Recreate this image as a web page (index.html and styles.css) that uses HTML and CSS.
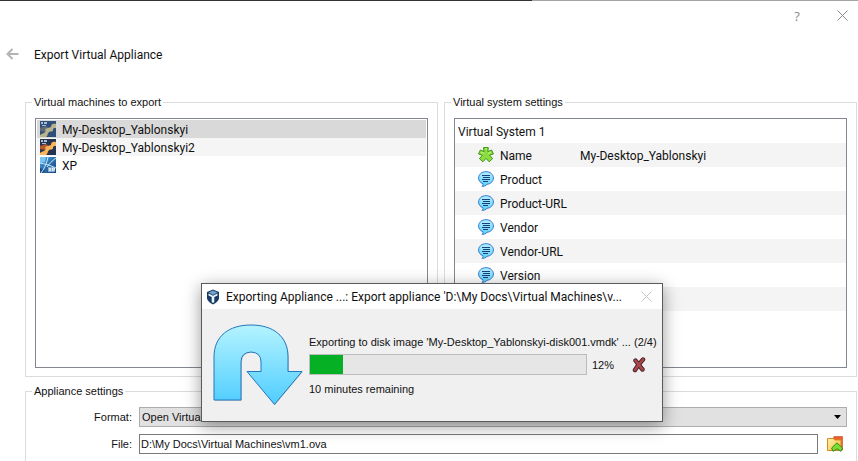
FILE: index.html
```html
<!DOCTYPE html>
<html lang="en">
<head>
<meta charset="utf-8">
<title>Export Virtual Appliance</title>
<link rel="stylesheet" href="styles.css">
</head>
<body>
<svg class="defs" aria-hidden="true">
  <defs>
    <linearGradient id="bubble-fill" x1="0" y1="0" x2="0" y2="1"><stop offset="0" stop-color="#b4efff"/><stop offset="1" stop-color="#5fcefb"/></linearGradient>
    <linearGradient id="arrow-fill" x1="0" y1="0" x2="0" y2="1"><stop offset="0" stop-color="#b4f3ff"/><stop offset="1" stop-color="#4fcdff"/></linearGradient>
    <linearGradient id="xp-fill" x1="0" y1="0" x2="1" y2="1"><stop offset="0" stop-color="#4ba3e3"/><stop offset="1" stop-color="#143f78"/></linearGradient>
    <linearGradient id="folder-fill" x1="0" y1="0" x2="1" y2="1"><stop offset="0" stop-color="#fff3a8"/><stop offset="1" stop-color="#f8bc45"/></linearGradient>
    <symbol id="bubble" viewBox="0 0 16 16">
      <path d="M8 .7C12.200 .7 15.400 3.300 15.400 7C15.400 10.500 12.400 13 9 13.300C7.800 14.700 6 15.500 4 15.300C4.900 14.500 5.200 13.700 5 12.800C2.400 11.900 .6 9.700 .6 7C.6 3.300 3.800 .7 8 .7Z" fill="url(#bubble-fill)" stroke="#2c78cc"/>
      <path d="M4 4.500h8M5 6.500h7M4 8.500h8M5 10.500h5" stroke="#16427e" fill="none"/>
    </symbol>
    <symbol id="vm-server" viewBox="0 0 16 16">
      <path class="vm-back" d="M0 0h16v16H0z"/>
      <path class="vm-tag" d="M1 1h2v2H1zM4 1h3v2H4zM2 4h4v1H2z"/>
      <path class="vm-mid" d="M0 7L6 5L10 8L5 11L0 10z"/>
      <path class="vm-shape" d="M16 3C13 2 11 3 11 6C9 7 7 7 5 8C6 9 6 11 4 12C2 13 1 13 0 14V16H6C8 15 7 13 9 11C11 10 13 11 13 9C13 7 14 7 16 7Z"/>
    </symbol>
  </defs>
</svg>

<div class="wizard">
  <div class="desktop-edge"></div>
  <header class="caption">
    <button class="caption-button" type="button" aria-label="Help">?</button>
    <button class="caption-button" type="button" aria-label="Close"><svg width="11" height="11" viewBox="0 0 11 11"><path d="M.5.5l10 10M10.500.5l-10 10"/></svg></button>
  </header>
  <div class="heading">
    <button class="back" type="button" aria-label="Back"><svg width="13" height="14" viewBox="0 0 13 14"><path d="M6.500 1L1.500 6l5 5M1.500 6H12.500"/></svg></button>
    <h1>Export Virtual Appliance</h1>
  </div>

  <main class="content">
    <div class="columns">
      <fieldset class="group">
        <legend>Virtual machines to export</legend>
        <ul class="panel machines" role="listbox" aria-label="Virtual machines to export">
          <li class="machine selected" role="option" aria-selected="true"><svg width="16" height="16"><use href="#vm-server"/></svg><span>My-Desktop_Yablonskyi</span></li>
          <li class="machine alternate" role="option" aria-selected="false"><svg width="16" height="16"><use href="#vm-server"/></svg><span>My-Desktop_Yablonskyi2</span></li>
          <li class="machine" role="option" aria-selected="false"><svg width="16" height="16" viewBox="0 0 16 16"><path fill="url(#xp-fill)" d="M0 0h16v16H0z"/><path fill="#7cc4f0" d="M0 0h6L5 5L0 6z"/><path fill="#174a82" d="M0 11l5 2l-2 3H0z"/><path d="M8 0C7 5 5 11 1 16M0 6c5 1 10 2 16 5M16 1C12 4 9 7 7 10" stroke="#c9eaff" fill="none"/><path fill="#7fa9cd" d="M8 10h7v5H8z"/><path d="M9 11l2 3M11 11l-2 3M12.500 14v-3h2v2h-2" stroke="#e6f2fb" fill="none"/></svg><span>XP</span></li>
        </ul>
      </fieldset>
      <fieldset class="group">
        <legend>Virtual system settings</legend>
        <div class="panel">
          <table class="settings">
            <colgroup><col class="name-column"><col></colgroup>
            <tbody>
              <tr><th colspan="2" class="system">Virtual System 1</th></tr>
              <tr><th scope="row"><span class="setting"><svg width="16" height="16" viewBox="0 0 16 16"><path d="M5.500 .6H10.300L9.800 4.700L13.600 3L15.400 7L11.600 8.200L14.600 11.600L11.200 14.800L8 11.400L4.800 14.800L1.400 11.600L4.400 8.200L.6 7L2.400 3L6 4.700Z" fill="#8add3c" stroke="#3c9418" stroke-linejoin="round"/><path d="M7 2h2M3 5l3 1.500M13 5l-3 1.500" stroke="#c4f58a" fill="none"/></svg>Name</span></th><td>My-Desktop_Yablonskyi</td></tr>
              <tr><th scope="row"><span class="setting"><svg width="16" height="16"><use href="#bubble"/></svg>Product</span></th><td></td></tr>
              <tr><th scope="row"><span class="setting"><svg width="16" height="16"><use href="#bubble"/></svg>Product-URL</span></th><td></td></tr>
              <tr><th scope="row"><span class="setting"><svg width="16" height="16"><use href="#bubble"/></svg>Vendor</span></th><td></td></tr>
              <tr><th scope="row"><span class="setting"><svg width="16" height="16"><use href="#bubble"/></svg>Vendor-URL</span></th><td></td></tr>
              <tr><th scope="row"><span class="setting"><svg width="16" height="16"><use href="#bubble"/></svg>Version</span></th><td></td></tr>
              <tr><th></th><td></td></tr>
            </tbody>
          </table>
        </div>
      </fieldset>
    </div>

    <fieldset class="group appliance">
      <legend>Appliance settings</legend>
      <div class="form">
        <label for="format">Format:</label>
        <div class="select-box">
          <select id="format"><option>Open Virtualization Format 2.0</option></select>
          <svg width="7" height="4" viewBox="0 0 7 4" aria-hidden="true"><path d="M0 0h7L3.500 4z"/></svg>
        </div>
        <label for="file">File:</label>
        <div class="file-row">
          <input id="file" type="text" value="D:\My Docs\Virtual Machines\vm1.ova">
          <button class="browse" type="button" aria-label="Choose file"><svg width="16" height="16" viewBox="0 0 16 16"><path d="M6 3L7 .5h8.500V14H6z" fill="#e8602a" stroke="#c94a1c" stroke-width=".6"/><path d="M.5 2.500h6l1 1.500h6.500v10.500H.5z" fill="url(#folder-fill)" stroke="#d98a22"/><path d="M10 6.800L15.500 12L14 15.300L10 12.800L6 15.300L4.600 12z" fill="#7bdc35" stroke="#32881a" stroke-linejoin="round"/></svg></button>
        </div>
      </div>
    </fieldset>
  </main>
</div>

<section class="dialog" role="dialog" aria-labelledby="dialog-title">
  <header class="dialog-bar">
    <svg width="12" height="16" viewBox="0 0 12 16"><path d="M6 .5L12 3v6.500Q11 13 6 15.500Q1 13 0 9.500V3z" fill="#183a64"/><path d="M6 1.500L10.500 3.500L6 6L1.500 3.500z" fill="#6f9fc5"/><path d="M1.500 4.500L6 6.800L10.500 4.500V6.500L7.300 8v5L6 14L4.700 13V8L1.500 6.500z" fill="#e8f4fb"/></svg>
    <h2 id="dialog-title">Exporting Appliance ...: Export appliance 'D:\My Docs\Virtual Machines\v...</h2>
    <button class="dialog-close" type="button" aria-label="Close"><svg width="11" height="11" viewBox="0 0 11 11"><path d="M.5.5l10 10M10.500.5l-10 10"/></svg></button>
  </header>
  <div class="dialog-body">
    <svg class="turn" width="91" height="84" viewBox="0 0 91 84"><path d="M2 77V34Q3 3 39 2Q75 3 76 34V48H90L62 81L35 48H49V38Q49 29 39 28.500Q29 29 29 38V77Z" fill="#777" opacity=".3"/><path d="M1 76V33C1 12 16 1 38 1S75 12 75 33V47.500H89L61.500 80.500L34 47.500H48V38Q48 28.500 38 28Q28 28.500 28 38V76Z" fill="url(#arrow-fill)" stroke="#2377bf"/></svg>
    <div class="status">
      <label for="progress">Exporting to disk image 'My-Desktop_Yablonskyi-disk001.vmdk' ... (2/4)</label>
      <div class="progress-row">
        <progress id="progress" max="100" value="12"></progress>
        <span class="percent">12%</span>
        <button class="cancel" type="button" aria-label="Cancel"><svg width="14" height="16" viewBox="0 0 14 16"><path d="M3.500 3.500Q6 7 10.500 12.500M11 2.500Q6 8 3 13" fill="none" stroke="#48202a" stroke-width="4.400" stroke-linecap="round"/><path d="M3.500 3.500Q6 7 10.500 12.500M11 2.500Q6 8 3 13" fill="none" stroke="#a94749" stroke-width="2.600" stroke-linecap="round"/></svg></button>
      </div>
      <p>10 minutes remaining</p>
    </div>
  </div>
</section>
</body>
</html>
```
FILE: styles.css
```css
* { box-sizing: border-box; }

body {
  margin: 0;
  height: 100vh;
  overflow: hidden;
  background: #fff;
  color: #111;
  font: 11px/16px "Liberation Sans", Arial, sans-serif;
}

button, select, input { font: inherit; color: inherit; }
button { padding: 0; border: 0; background: none; }
h1, h2, p, ul { margin: 0; padding: 0; }
svg { display: block; flex: none; }
.defs { position: absolute; width: 0; height: 0; }

.wizard {
  display: flex;
  flex-direction: column;
  min-height: 100vh;
}
.desktop-edge {
  height: 1px;
  background: linear-gradient(90deg, #35332f 62%, #a5a5a5 62%);
}

.caption {
  display: flex;
  justify-content: flex-end;
  gap: 13px;
  height: 29px;
}
.caption-button {
  display: grid;
  place-items: center;
  width: 32px;
  font: 13px/16px "Open Sans", sans-serif;
  color: #888;
}
.caption-button path, .dialog-close path { stroke: #888; fill: none; }

.heading {
  display: flex;
  align-items: center;
  gap: 15px;
  height: 50px;
  padding-left: 6px;
}
.heading h1, .dialog h2, .panel {
  font: 12px/18px Roboto, sans-serif;
}
.back path { stroke: #b4b4b4; stroke-width: 2; fill: none; }

.content {
  display: flex;
  flex: 1;
  flex-direction: column;
  gap: 6px;
  padding: 14px 1px 0 25px;
}
.columns {
  display: grid;
  grid-template-columns: 1fr 1fr;
  gap: 6px;
}
.group {
  display: flex;
  flex-direction: column;
  min-width: 0;
  margin: 0;
  padding: 8px 9px;
  border: 1px solid #dcdcdc;
}
.group legend { margin-left: -3px; padding: 0 2px; }
.panel {
  height: 250px;
  border: 1px solid #828790;
  background: #fff;
  overflow: hidden;
}

.machines { padding: 1px; list-style: none; }
.machine {
  display: flex;
  align-items: center;
  gap: 6px;
  height: 18px;
  padding-left: 3px;
  --vm-back: #27344f;
  --vm-mid: #b5572a;
  --vm-shape: #fbb65a;
}
.machine span { padding-top: 2px; }
.selected {
  background: #d9d9d9;
  --vm-back: #2f4f78;
  --vm-mid: #5f6c78;
  --vm-shape: #b9b28f;
}
.alternate { background: #f5f5f5; }
.vm-back { fill: var(--vm-back); }
.vm-mid { fill: var(--vm-mid); }
.vm-shape { fill: var(--vm-shape); }
.vm-tag { fill: #a8bdd6; }

.settings { width: 100%; border-collapse: collapse; table-layout: fixed; }
.settings tr { height: 24px; }
.settings tr:nth-child(even) { background: #f4f4f4; }
.settings th, .settings td { padding: 2px 0 0; font-weight: normal; text-align: left; }
.name-column { width: 125px; }
.settings .system { padding-left: 3px; }
.setting { display: flex; align-items: center; gap: 6px; padding-left: 23px; }
.setting svg { margin-top: -2px; }

.appliance { flex: 1; border-bottom: 0; }
.form {
  display: grid;
  grid-template-columns: 97px 1fr;
  gap: 7px;
  align-items: center;
}
.form label { text-align: right; }
.select-box { display: grid; align-items: center; }
.select-box select, .select-box svg { grid-area: 1 / 1; }
.select-box svg { justify-self: end; margin-right: 6px; pointer-events: none; }
.form select, .form input {
  width: 100%;
  height: 20px;
  margin: 0;
  padding: 0 2px;
  border: 1px solid #adadad;
  border-radius: 0;
  appearance: none;
  background: #e1e1e1;
}
.form input { flex: 1; padding: 0 1px; border-color: #7a7a7a; background: #fff; }
.file-row { display: flex; align-items: center; gap: 9px; padding-right: 4px; }

.dialog {
  position: absolute;
  top: 283px;
  left: 201px;
  width: 462px;
  border: 1px solid #5b5b5b;
  background: #f0f0f0;
  box-shadow: 0 4px 16px rgba(0, 0, 0, .4);
}
.dialog-bar {
  display: flex;
  align-items: center;
  gap: 7px;
  height: 25px;
  padding: 0 10px 0 5px;
  background: #fff;
}
.dialog h2 { flex: 1; white-space: nowrap; }
.dialog-close path { stroke: #c4c4c4; }
.dialog-body {
  display: flex;
  gap: 4px;
  padding: 15px 11px 13px 11px;
}
.status {
  display: flex;
  flex: 1;
  flex-direction: column;
  gap: 4px;
  padding: 10px 0 0 1px;
}
.status label { white-space: nowrap; }
.status p { margin-top: 2px; }
.progress-row { display: flex; align-items: center; height: 21px; }
progress {
  width: 278px;
  height: 21px;
  border: 1px solid #bcbcbc;
  appearance: none;
  background: #e6e6e6;
}
progress::-webkit-progress-bar { background: #e6e6e6; }
progress::-webkit-progress-value { background: #06b025; }
.percent { width: 45px; padding-left: 5px; }
```
